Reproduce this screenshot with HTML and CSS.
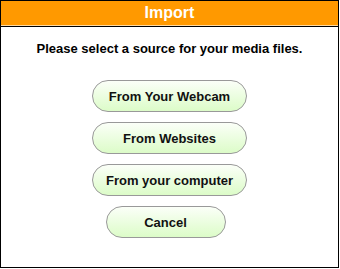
FILE: index.html
```html
<!DOCTYPE html>
<html lang="en">
<head>
    <meta charset="UTF-8">
    <title>Import</title>
    <link rel="stylesheet" href="styles.css">
</head>
<body>
<div class="dialog">
    <div class="dialog-title">Import</div>
    <div class="dialog-body">
        <p class="message">Please select a source for your media files.</p>
        <div class="choices">
            <button type="button" class="choice">From Your Webcam</button>
            <button type="button" class="choice">From Websites</button>
            <button type="button" class="choice">From your computer</button>
            <button type="button" class="choice cancel">Cancel</button>
        </div>
    </div>
</div>
</body>
</html>
```

FILE: styles.css
```css
body { margin: 0; background: #fff; font-family: "Liberation Sans", Arial, sans-serif; }
.dialog { width: 339px; height: 268px; box-sizing: border-box; border: 1px solid #000; display: flex; flex-direction: column; }
.dialog-title { height: 26px; box-sizing: border-box; border-bottom: 1px solid #000; background: linear-gradient(#ff9900 calc(100% - 1px), #ffd9a0 0); color: #fff; font-weight: bold; font-size: 16px; line-height: 23px; text-align: center; }
.dialog-body { display: flex; flex-direction: column; align-items: center; }
.message { margin: 14px 0 0; font-size: 13px; font-weight: bold; line-height: 15px; color: #000; }
.choices { margin-top: 24px; display: flex; flex-direction: column; align-items: center; gap: 10px; }
.choice { width: 155px; height: 32px; border: 1px solid #999; border-radius: 16px; background: linear-gradient(#fbfff8, #dcfcc8); font-family: inherit; font-size: 13px; font-weight: bold; color: #111; padding: 0; cursor: pointer; }
.choice.cancel { width: 120px; margin-right: 8px; }
```
